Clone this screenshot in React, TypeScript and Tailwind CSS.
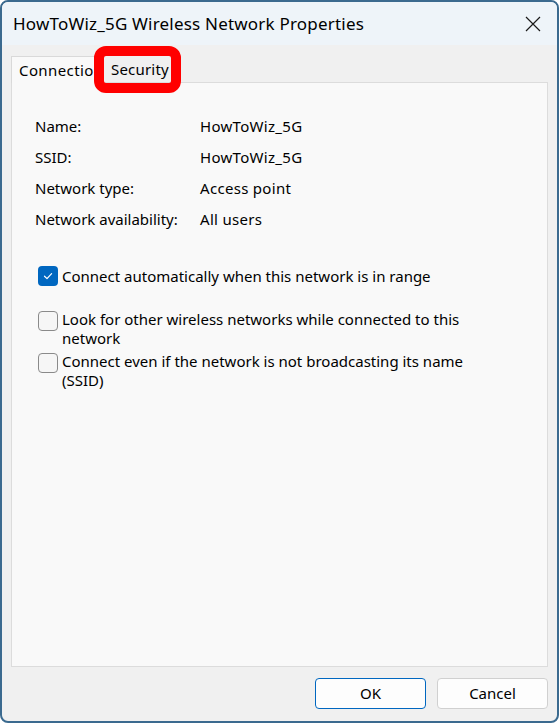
import React from "react";

const rows: [string, string][] = [
  ["Name:", "HowToWiz_5G"],
  ["SSID:", "HowToWiz_5G"],
  ["Network type:", "Access point"],
  ["Network availability:", "All users"],
];

function Box({ checked }: { checked?: boolean }) {
  if (checked) {
    return (
      <span className="flex h-[20px] w-[20px] shrink-0 items-center justify-center rounded-[4px] bg-[#0067c0]">
        <svg width="12" height="12" viewBox="0 0 12 12" fill="none">
          <path d="M2.5 6.2 L5 8.6 L9.6 3.6" stroke="white" strokeWidth="1.2" strokeLinecap="round" strokeLinejoin="round" />
        </svg>
      </span>
    );
  }
  return <span className="block h-[20px] w-[20px] shrink-0 rounded-[4px] border border-[#8a8a8a] bg-[#f6f6f6]" />;
}

export default function App() {
  return (
    <div className="h-[723px] w-[559px] bg-white" style={{ fontFamily: '"Noto Sans", sans-serif' }}>
      <div className="relative flex h-full w-full flex-col overflow-hidden rounded-[8px] border-2 border-[#3b6a8f] bg-[#f0f0f0] text-[15px] text-black">
        {/* title bar */}
        <div className="flex h-[43px] shrink-0 items-center justify-between bg-[#eef4f9] pl-[11px] pr-[14px]">
          <span className="text-[17px] leading-none tracking-[0.2px]">HowToWiz_5G Wireless Network Properties</span>
          <svg width="16" height="16" viewBox="0 0 16 16" className="mr-[2px]">
            <path d="M1 1 L15 15 M15 1 L1 15" stroke="#1a1a1a" strokeWidth="1.2" />
          </svg>
        </div>

        {/* tabs */}
        <div className="flex h-[37px] items-end pl-[9px] pt-[10px]">
          <div className="relative z-10 -mb-px flex h-[27px] w-[86px] items-center whitespace-nowrap border border-b-0 border-[#d9d9d9] bg-[#f9f9f9] pl-[7px] tracking-[0.4px]">
            Connection
          </div>
          <div className="flex h-[25px] items-center pl-[14px] pr-[10px] tracking-[0.2px]">Security</div>
        </div>

        {/* panel */}
        <div className="mx-[9px] flex h-[585px] flex-col border border-[#dcdcdc] bg-[#f9f9f9] pl-[23px] pt-[33px]">
          <div className="flex flex-col gap-[10px]">
            {rows.map(([k, v]) => (
              <div key={k} className="flex h-[21px] items-center">
                <span className="w-[165px]">{k}</span>
                <span className="tracking-[0.3px]">{v}</span>
              </div>
            ))}
          </div>

          <div className="mt-[35px] flex items-center gap-[4px] pl-[3px]">
            <Box checked />
            <span>Connect automatically when this network is in range</span>
          </div>

          <div className="mt-[22px] flex items-start gap-[4px] pl-[3px]">
            <span className="pt-[1px]"><Box /></span>
            <span className="w-[420px] leading-[19px]">Look for other wireless networks while connected to this network</span>
          </div>
          <div className="mt-[4px] flex items-start gap-[4px] pl-[3px]">
            <span className="pt-[1px]"><Box /></span>
            <span className="w-[420px] leading-[19px]">Connect even if the network is not broadcasting its name (SSID)</span>
          </div>
        </div>

        {/* buttons */}
        <div className="flex justify-end gap-[11px] pr-[9px] pt-[11px]">
          <button className="h-[31px] w-[111px] rounded-[4px] border border-[#0067c0] bg-[#fdfdfd]">OK</button>
          <button className="h-[31px] w-[111px] rounded-[4px] border border-[#d0d0d0] bg-[#fdfdfd]">Cancel</button>
        </div>

        {/* highlight frame */}
        <div className="pointer-events-none absolute left-[92px] top-[44px] z-20 h-[47px] w-[87px] rounded-[12px] border-[10px] border-[#ff0000]" />
      </div>
    </div>
  );
}
